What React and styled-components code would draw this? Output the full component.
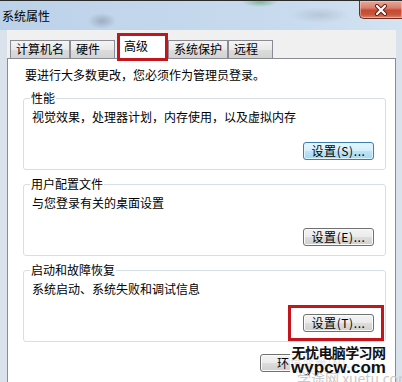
import React from 'react';
import styled, { createGlobalStyle } from 'styled-components';

const Global = createGlobalStyle`
  html, body {
    margin: 0;
    padding: 0;
    width: 402px;
    height: 382px;
    overflow: hidden;
    background: #d9e3ee;
  }
  body {
    font-family: "Noto Sans CJK SC", "Noto Sans", sans-serif;
    font-size: 12px;
    color: #000;
  }
`;

const Window = styled.div`
  position: relative;
  width: 402px;
  height: 382px;
  display: flex;
  flex-direction: column;
  background: #dae3ec;
  overflow: hidden;
`;

const TitleBar = styled.div`
  box-sizing: border-box;
  height: 30px;
  border-top: 1px solid #2a2a2a;
  display: flex;
  align-items: flex-start;
  justify-content: space-between;
  background:
    radial-gradient(ellipse 14px 8px at 102px 20px, rgba(90, 100, 110, 0.35), rgba(90, 100, 110, 0) 100%),
    radial-gradient(ellipse 18px 5px at 260px 1px, rgba(80, 160, 90, 0.6), rgba(80, 160, 90, 0) 100%),
    radial-gradient(ellipse 30px 8px at 320px 14px, rgba(120, 135, 150, 0.25), rgba(120, 135, 150, 0) 100%),
    linear-gradient(90deg, #bcd2e9 0%, #c3d7ec 40%, #c9dbee 75%, #d3e3f2 100%);
`;

const Title = styled.span`
  padding: 8px 0 0 2px;
  line-height: 14px;
  font-size: 12px;
`;

const CloseButton = styled.div`
  box-sizing: border-box;
  width: 43px;
  height: 18px;
  display: flex;
  align-items: center;
  justify-content: center;
  border: 1px solid #6e2a20;
  border-top: none;
  border-right: none;
  border-bottom-left-radius: 5px;
  background: linear-gradient(#e9a898 0%, #d9806e 40%, #c54a33 55%, #c9553d 80%, #dc8a6c 100%);
  box-shadow: inset 0 0 0 1px rgba(255, 220, 210, 0.45);
`;

const Body = styled.div`
  flex: 1;
  min-height: 0;
  display: flex;
  flex-direction: column;
  margin: 0 6px 0 7px;
  background: #f0f0f0;
`;

const TabStrip = styled.div`
  position: relative;
  z-index: 1;
  height: 28px;
  display: flex;
  align-items: flex-end;
  padding-left: 3px;
`;

const Tab = styled.div`
  box-sizing: border-box;
  height: 18px;
  min-width: 45px;
  padding: 0 5px;
  line-height: 16px;
  white-space: nowrap;
  border: 1px solid #898c95;
  border-bottom: none;
  background: linear-gradient(#f4f4f4 0%, #e9e9e9 50%, #dcdcdc 51%, #d3d3d3 100%);
`;

const ActiveTab = styled.div`
  box-sizing: border-box;
  position: relative;
  z-index: 2;
  height: 28px;
  width: 51px;
  margin: 0 0 -3px 2px;
  padding: 3px 0 0 4px;
  line-height: 14px;
  border: 3px solid #c4151c;
  background: #fff;
`;

const Panel = styled.div`
  flex: 1;
  display: flex;
  flex-direction: column;
  background: #fff;
  border: 1px solid #898c95;
  border-bottom: none;
  padding: 9px 9px 0 15px;
`;

const Intro = styled.div`
  line-height: 14px;
  padding-left: 2px;
`;

const Group = styled.fieldset`
  margin: ${(p) => (p.$first ? '9px' : '7px')} 0 0;
  min-width: 0;
  display: flex;
  flex-direction: column;
  border: 1px solid #d5dfe5;
  border-radius: 3px;
  padding: 5px 11px 9px 8px;
`;

const Legend = styled.legend`
  margin-left: -2px;
  padding: 0 1px;
  line-height: 14px;
  font-size: 12px;
`;

const Description = styled.div`
  line-height: 14px;
`;

const Button = styled.button`
  box-sizing: border-box;
  align-self: flex-end;
  position: relative;
  width: ${(p) => p.$width || 71}px;
  height: 18px;
  margin-top: ${(p) => p.$top ?? 18}px;
  padding: 0;
  font-family: "Noto Sans CJK SC", "Noto Sans", sans-serif;
  font-size: 12px;
  line-height: 16px;
  letter-spacing: 0.6px;
  color: #000;
  border: 1px solid ${(p) => (p.$focused ? '#3c7fb1' : '#707070')};
  border-radius: 3px;
  box-shadow: inset 0 0 0 1px ${(p) => (p.$focused ? '#dff3fd' : '#fbfbfb')};
  background: ${(p) =>
    p.$focused
      ? 'linear-gradient(#e5f5fd 0%, #d3eefc 50%, #bbe4fb 51%, #a6d8f4 100%)'
      : 'linear-gradient(#f3f3f3 0%, #ebebeb 50%, #dddddd 51%, #cfcfcf 100%)'};

  &::after {
    content: ${(p) => (p.$marked ? "''" : 'none')};
    position: absolute;
    top: -10px;
    bottom: -10px;
    left: -16px;
    right: -11px;
    border: 3px solid #c4151c;
  }
`;

const Footer = styled.div`
  display: flex;
  justify-content: flex-end;
  padding-right: 11px;
  margin-top: 12px;
`;

const Watermark = styled.div`
  position: absolute;
  left: 290px;
  top: 345px;
  width: 97px;
  height: 30px;
  background: rgba(255, 255, 255, 0.88);
  display: flex;
  flex-direction: column;
  align-items: center;
`;

const WatermarkCn = styled.div`
  font-family: "Noto Sans CJK SC", sans-serif;
  font-weight: 700;
  font-size: 14px;
  letter-spacing: -0.6px;
  line-height: 15px;
  color: #111;
`;

const WatermarkEn = styled.div`
  font-family: "Liberation Sans", Arial, sans-serif;
  font-weight: 700;
  font-size: 17px;
  line-height: 15px;
  color: #111;
`;

const FaintMark = styled.div`
  position: absolute;
  left: 297px;
  top: 370px;
  font-family: "Noto Sans CJK SC", "Liberation Sans", sans-serif;
  font-size: 14px;
  line-height: 16px;
  color: #c9c9c9;
  white-space: nowrap;
`;

function CloseIcon() {
  return (
    <svg width="16" height="12" viewBox="0 0 16 12">
      <path d="M4 2 L12 10 M12 2 L4 10" stroke="#5a1d14" strokeWidth="4" strokeLinecap="round" />
      <path d="M4 2 L12 10 M12 2 L4 10" stroke="#ffffff" strokeWidth="2.2" strokeLinecap="round" />
    </svg>
  );
}

const tabs = ['计算机名', '硬件', '高级', '系统保护', '远程'];

const groups = [
  { title: '性能', text: '视觉效果，处理器计划，内存使用，以及虚拟内存', button: '设置(S)...', focused: true },
  { title: '用户配置文件', text: '与您登录有关的桌面设置', button: '设置(E)...' },
  { title: '启动和故障恢复', text: '系统启动、系统失败和调试信息', button: '设置(T)...', marked: true },
];

export default function App() {
  return (
    <>
      <Global />
      <Window>
        <TitleBar>
          <Title>系统属性</Title>
          <CloseButton>
            <CloseIcon />
          </CloseButton>
        </TitleBar>
        <Body>
          <TabStrip>
            {tabs.map((t) =>
              t === '高级' ? <ActiveTab key={t}>{t}</ActiveTab> : <Tab key={t}>{t}</Tab>
            )}
          </TabStrip>
          <Panel>
            <Intro>要进行大多数更改，您必须作为管理员登录。</Intro>
            {groups.map((g, i) => (
              <Group key={g.title} $first={i === 0}>
                <Legend>{g.title}</Legend>
                <Description>{g.text}</Description>
                <Button $focused={g.focused} $marked={g.marked}>
                  {g.button}
                </Button>
              </Group>
            ))}
            <Footer>
              <Button $width={115} $top={0}>环境变量(N)...</Button>
            </Footer>
          </Panel>
        </Body>
        <Watermark>
          <WatermarkCn>无忧电脑学习网</WatermarkCn>
          <WatermarkEn>wypcw.com</WatermarkEn>
        </Watermark>
        <FaintMark>学途网 xuetu.com</FaintMark>
      </Window>
    </>
  );
}
